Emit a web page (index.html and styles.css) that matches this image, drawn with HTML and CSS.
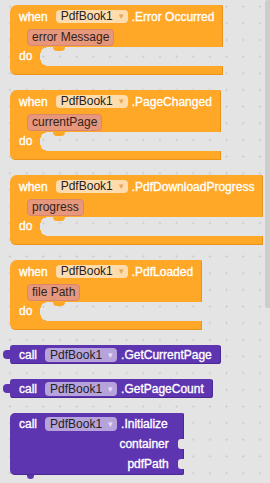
FILE: index.html
```html
<!DOCTYPE html>
<html lang="en">
<head>
    <meta charset="UTF-8">
    <meta name="viewport" content="width=device-width, initial-scale=1.0">
    <title>PdfBook1 Blocks</title>
    <link rel="stylesheet" href="styles.css">
</head>
<body>
<div class="workspace">
    <div class="event">
        <div class="event-head">
            <div class="row">
                <span class="label">when</span>
                <span class="dropdown">PdfBook1<i class="arrow">▾</i></span>
                <span class="label name">.Error Occurred</span>
            </div>
            <div class="row params">
                <span class="param">error Message</span>
            </div>
        </div>
        <div class="event-do">
            <span class="do-arm">do</span>
            <span class="do-gap"><i class="notch"></i></span>
        </div>
        <div class="event-foot"></div>
    </div>

    <div class="event">
        <div class="event-head">
            <div class="row">
                <span class="label">when</span>
                <span class="dropdown">PdfBook1<i class="arrow">▾</i></span>
                <span class="label name">.PageChanged</span>
            </div>
            <div class="row params">
                <span class="param">currentPage</span>
            </div>
        </div>
        <div class="event-do">
            <span class="do-arm">do</span>
            <span class="do-gap"><i class="notch"></i></span>
        </div>
        <div class="event-foot"></div>
    </div>

    <div class="event">
        <div class="event-head">
            <div class="row">
                <span class="label">when</span>
                <span class="dropdown">PdfBook1<i class="arrow">▾</i></span>
                <span class="label name">.PdfDownloadProgress</span>
            </div>
            <div class="row params">
                <span class="param">progress</span>
            </div>
        </div>
        <div class="event-do">
            <span class="do-arm">do</span>
            <span class="do-gap"><i class="notch"></i></span>
        </div>
        <div class="event-foot"></div>
    </div>

    <div class="event">
        <div class="event-head">
            <div class="row">
                <span class="label">when</span>
                <span class="dropdown">PdfBook1<i class="arrow">▾</i></span>
                <span class="label name">.PdfLoaded</span>
            </div>
            <div class="row params">
                <span class="param">file Path</span>
            </div>
        </div>
        <div class="event-do">
            <span class="do-arm">do</span>
            <span class="do-gap"><i class="notch"></i></span>
        </div>
        <div class="event-foot"></div>
    </div>

    <div class="call getter">
        <span class="label">call</span>
        <span class="dropdown">PdfBook1<i class="arrow">▾</i></span>
        <span class="label name">.GetCurrentPage</span>
    </div>

    <div class="call getter">
        <span class="label">call</span>
        <span class="dropdown">PdfBook1<i class="arrow">▾</i></span>
        <span class="label name">.GetPageCount</span>
    </div>

    <div class="call method">
        <div class="row first">
            <span class="label">call</span>
            <span class="dropdown">PdfBook1<i class="arrow">▾</i></span>
            <span class="label name">.Initialize</span>
        </div>
        <div class="row input">
            <span class="label">container</span>
            <i class="socket"></i>
        </div>
        <div class="row input">
            <span class="label">pdfPath</span>
            <i class="socket"></i>
        </div>
    </div>

    <div class="scrollbar"></div>
</div>
</body>
</html>
```

FILE: styles.css
```css
body {
    margin: 0;
    font-family: "Liberation Sans", Arial, sans-serif;
    font-size: 12px;
    width: 270px;
    height: 483px;
    overflow: hidden;
}

.workspace {
    position: relative;
    box-sizing: border-box;
    height: 483px;
    padding: 5px 0 0 10px;
    display: flex;
    flex-direction: column;
    align-items: flex-start;
    gap: 15px;
    background-color: #e4e4e4;
    background-image: radial-gradient(circle, #cdcdcd 0.9px, transparent 1.3px);
    background-size: 16.667px 16.667px;
    background-position: 1.7px -1.7px;
}

.label {
    color: #fff;
    white-space: nowrap;
    -webkit-text-stroke: 0.35px #fff;
}

.label.name {
    margin-left: 4px;
}

.dropdown {
    display: inline-flex;
    align-items: center;
    height: 13px;
    line-height: 13px;
    padding: 0 4px 0 5px;
    margin-left: 8px;
    border-radius: 4px;
    color: #222;
    white-space: nowrap;
}

.dropdown .arrow {
    font-style: normal;
    font-size: 9px;
    margin-left: 6px;
}

/* Event blocks */
.event {
    display: flex;
    flex-direction: column;
}

.event-head {
    padding: 5px 9px 1px 9px;
    background: #ffa726;
    border-radius: 7px 2px 0 0;
    box-shadow: inset -1px 0 0 #e8931a;
}

.event .row {
    display: flex;
    align-items: center;
    height: 13px;
}

.event .row.params {
    height: 17px;
    margin-top: 6px;
    padding-left: 8px;
}

.event .dropdown {
    background: #ffdcae;
}

.event .dropdown .arrow {
    color: #e9a650;
}

.param {
    box-sizing: border-box;
    height: 17px;
    line-height: 15px;
    padding: 0 4px;
    border: 1px solid #d9866a;
    border-radius: 4px;
    background: #e6977c;
    color: #33231c;
    white-space: nowrap;
}

.event-do {
    display: flex;
    height: 19px;
}

.do-arm {
    width: 21px;
    padding-left: 9px;
    line-height: 19px;
    background: #ffa726;
    color: #fff;
    -webkit-text-stroke: 0.35px #fff;
}

.do-gap {
    position: relative;
    flex: 1;
    background:
        radial-gradient(circle at 100% 100%, transparent 5px, #ffa726 5.5px) top left / 6px 6px no-repeat,
        radial-gradient(circle at 100% 0, transparent 5px, #ffa726 5.5px) bottom left / 6px 6px no-repeat;
}

.do-gap .notch {
    position: absolute;
    left: 13px;
    top: 0;
    width: 12px;
    height: 4px;
    background: #ffa726;
    border-radius: 0 0 6px 6px;
}

.event-foot {
    height: 9px;
    background: #ffa726;
    border-radius: 0 0 0 6px;
    box-shadow: inset -1px -1px 0 #e8931a;
}

/* Call blocks */
.call {
    position: relative;
    background: #5e35b1;
    box-shadow: inset -1px -1px 0 #4c2894;
}

.call .dropdown {
    background: #b7a3dc;
    height: 14px;
    line-height: 14px;
}

.call .dropdown .arrow {
    color: #e6def5;
}

.call.getter {
    display: flex;
    align-items: center;
    height: 19px;
    padding: 0 9px;
    border-radius: 3px;
}

.call.getter::before {
    content: "";
    position: absolute;
    left: -7px;
    top: 5px;
    width: 8px;
    height: 9px;
    background: #5e35b1;
    border-radius: 4px 0 0 4px;
}

.call.method {
    display: flex;
    flex-direction: column;
    height: 62px;
    border-radius: 5px 2px 2px 5px;
}

.call.method::after {
    content: "";
    position: absolute;
    left: 17px;
    bottom: -4px;
    width: 7px;
    height: 4px;
    background: #5e35b1;
    border-radius: 0 0 4px 4px;
}

.call.method .row {
    display: flex;
    align-items: center;
    height: 21px;
}

.call.method .row.first {
    padding: 0 16px 0 9px;
}

.call.method .row.input {
    justify-content: flex-end;
    gap: 9px;
    height: 20px;
}

.socket {
    width: 6px;
    height: 10px;
    background: #e4e4e4;
    border-radius: 3px 0 0 3px;
}

.scrollbar {
    position: absolute;
    top: 0;
    right: 0;
    width: 5px;
    height: 308px;
    background: #cdcdcd;
    border-radius: 3px 0 0 3px;
}
```
